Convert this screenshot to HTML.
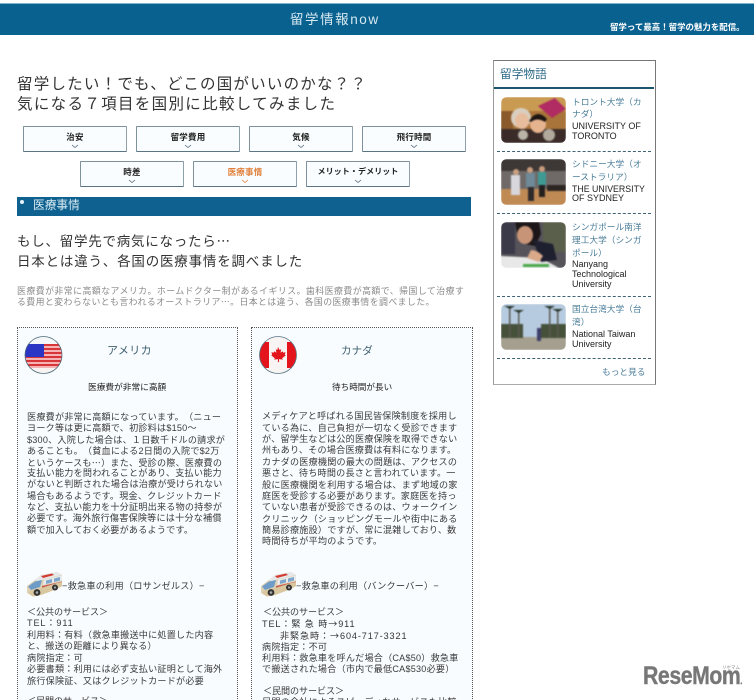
<!DOCTYPE html>
<html lang="ja"><head><meta charset="utf-8"><title>留学情報now</title>
<style>
html,body{margin:0;padding:0;background:#fff;width:754px;height:700px;overflow:hidden}
body{font-family:"Liberation Sans","Noto Sans CJK JP",sans-serif;text-spacing-trim:space-all}
#w{position:relative;width:754px;height:700px;overflow:hidden;filter:blur(.35px)}
.a{position:absolute}
.t{position:absolute;white-space:nowrap;line-height:1}
.j{font-family:"Noto Sans CJK JP",sans-serif}
.btn{position:absolute;width:102px;height:24px;background:#f9fdff;border:1px solid #7f929c;border-bottom:1.5px solid #5d7482;border-right:1.5px solid #8fa0aa;border-radius:1px}
.btn span{position:absolute;left:0;right:0;top:6.3px;text-align:center;font-size:8.5px;line-height:1;font-weight:700;color:#222;letter-spacing:.2px}
.btn svg{position:absolute;left:47px;top:17px}
.card{position:absolute;top:327px;height:380px;background:#f8fcff;border:1px dotted #555;box-sizing:border-box}
.b{font-size:9.1px;letter-spacing:.22px;color:#3a3a3a;margin-top:1px}
.l{font-size:8.7px;color:#4a7d99}
.e{font-size:9px;color:#222}
.d{position:absolute;left:497px;width:154px;border-top:1px dashed #3f6275}
.ph{position:absolute;left:501px;width:65px;height:46px;border-radius:6px;overflow:hidden}
.ph svg{filter:blur(.7px);display:block}
</style></head><body><div id="w">

<div class="a" style="left:0;top:3px;width:754px;height:1px;background:#7fb6cc"></div>
<div class="a" style="left:0;top:4px;width:754px;height:31px;background:#09618f"></div>
<div class="t" style="left:290px;top:13px;font-size:13.5px;letter-spacing:1.55px;color:#d6e8f0">留学情報now</div>
<div class="t" style="left:610px;top:22.700px;font-size:8.45px;font-weight:700;color:#fff">留学って最高！留学の魅力を配信。</div>

<div class="t" style="left:17px;top:76.500px;font-size:15.500px;letter-spacing:1.22px;color:#333">留学したい！でも、どこの国がいいのかな？？</div>
<div class="t" style="left:17px;top:96.500px;font-size:15.500px;letter-spacing:1.33px;color:#333">気になる７項目を国別に比較してみました</div>

<div class="btn" style="left:23px;top:126px"><span>治安</span><svg width="8" height="5"><path d="M1 1l3 2.5L7 1" fill="none" stroke="#567" stroke-width=".8"/></svg></div>
<div class="btn" style="left:136px;top:126px"><span>留学費用</span><svg width="8" height="5"><path d="M1 1l3 2.5L7 1" fill="none" stroke="#567" stroke-width=".8"/></svg></div>
<div class="btn" style="left:249px;top:126px"><span>気候</span><svg width="8" height="5"><path d="M1 1l3 2.5L7 1" fill="none" stroke="#567" stroke-width=".8"/></svg></div>
<div class="btn" style="left:362px;top:126px"><span>飛行時間</span><svg width="8" height="5"><path d="M1 1l3 2.5L7 1" fill="none" stroke="#567" stroke-width=".8"/></svg></div>
<div class="btn" style="left:80px;top:161px"><span>時差</span><svg width="8" height="5"><path d="M1 1l3 2.5L7 1" fill="none" stroke="#567" stroke-width=".8"/></svg></div>
<div class="btn" style="left:193px;top:161px"><span style="color:#e0803a">医療事情</span><svg width="8" height="5"><path d="M1 1l3 2.5L7 1" fill="none" stroke="#e0803a" stroke-width=".8"/></svg></div>
<div class="btn" style="left:306px;top:161px"><span style="font-size:8px;letter-spacing:.1px">メリット・デメリット</span><svg width="8" height="5"><path d="M1 1l3 2.5L7 1" fill="none" stroke="#567" stroke-width=".8"/></svg></div>

<div class="a" style="left:17px;top:197px;width:454px;height:19px;background:#0f6290"></div>
<div class="a" style="left:19.5px;top:199.5px;width:4px;height:4px;border-radius:50%;background:#e8f3f8"></div>
<div class="t" style="left:33px;top:200px;font-size:11.7px;color:#d9ebf3">医療事情</div>

<div class="t" style="left:17px;top:234px;font-size:13.5px;letter-spacing:.75px;color:#333">もし、留学先で病気になったら<span class="j">…</span></div>
<div class="t" style="left:17px;top:255px;font-size:13.5px;letter-spacing:.8px;color:#333">日本とは違う、各国の医療事情を調べました</div>

<div class="t" style="left:17px;top:287px;font-size:8.9px;letter-spacing:.48px;color:#8a8a8a">医療費が非常に高額なアメリカ。ホームドクター制があるイギリス。歯科医療費が高額で、帰国して治療す</div>
<div class="t" style="left:17px;top:298px;font-size:8.9px;letter-spacing:.43px;color:#8a8a8a">る費用と変わらないとも言われるオーストラリア<span class="j">…</span>。日本とは違う、各国の医療事情を調べました。</div>

<div class="card" style="left:17px;width:221px"></div>
<div class="card" style="left:251px;width:222px"></div>

<svg class="a" style="left:24px;top:336px" width="40" height="38" viewBox="0 0 40 38">
<defs><clipPath id="u"><circle cx="19.5" cy="19" r="18.5"/></clipPath></defs>
<circle cx="19.5" cy="19" r="18.5" fill="#f7f3f3"/>
<g clip-path="url(#u)">
<rect x="0" y="8" width="40" height="24" fill="#f6b3b3"/>
<g fill="#d8353a"><rect y="8" width="40" height="2"/><rect y="12" width="40" height="2"/><rect y="16" width="40" height="2"/><rect y="20" width="40" height="2"/><rect y="24" width="40" height="2"/><rect y="28" width="40" height="2"/></g>
<rect x="0" y="8" width="20" height="13" fill="#2b36c4"/>
<rect x="0" y="0" width="40" height="8" fill="#f4f6f8"/>
</g>
<circle cx="19.5" cy="19" r="18.5" fill="none" stroke="#4d6b7a" stroke-width=".8"/>
</svg>

<svg class="a" style="left:258px;top:336px" width="40" height="38" viewBox="0 0 40 38">
<defs><clipPath id="c"><circle cx="20" cy="19" r="18.5"/></clipPath></defs>
<circle cx="20" cy="19" r="18.5" fill="#f8f4f4"/>
<g clip-path="url(#c)">
<rect x="0" y="6" width="11" height="26" fill="#e3141c"/>
<rect x="29" y="6" width="11" height="26" fill="#e3141c"/>
<path d="M20 11l1.6 3 1.6-.8-.6 3.6 2-1.6.6 1.4 2.4-.4-.8 2.4 1 .6-3.6 3 .5 1.4-3.7-.5.1 3h-1.2l.1-3-3.7.5.5-1.4-3.6-3 1-.6-.8-2.4 2.4.4.6-1.4 2 1.6-.6-3.6 1.6.8z" fill="#e3141c"/>
</g>
<circle cx="20" cy="19" r="18.5" fill="none" stroke="#5a7684" stroke-width=".8"/>
</svg>

<div class="t" style="left:107px;top:346px;font-size:11px;letter-spacing:.4px;color:#3f5f70">アメリカ</div>
<div class="t" style="left:341px;top:346px;font-size:10.5px;letter-spacing:.1px;color:#3f5f70">カナダ</div>
<div class="t" style="left:88px;top:382.500px;font-size:8.7px;color:#222">医療費が非常に高額</div>
<div class="t" style="left:332px;top:382.500px;font-size:8.6px;color:#222">待ち時間が長い</div>

<div class="t b" style="left:27px;top:412px">医療費が非常に高額になっています。（ニュー</div>
<div class="t b" style="left:27px;top:423px">ヨーク等は更に高額で、初診料は$150～</div>
<div class="t b" style="left:27px;top:434.5px">$300、入院した場合は、１日数千ドルの請求が</div>
<div class="t b" style="left:27px;top:445.5px">あることも。（貧血による2日間の入院で$2万</div>
<div class="t b" style="left:27px;top:457px">というケースも<span class="j">…</span>）また、受診の際、医療費の</div>
<div class="t b" style="left:27px;top:468px">支払い能力を問われることがあり、支払い能力</div>
<div class="t b" style="left:27px;top:479px">がないと判断された場合は治療が受けられない</div>
<div class="t b" style="left:27px;top:490.5px">場合もあるようです。現金、クレジットカード</div>
<div class="t b" style="left:27px;top:501.5px">など、支払い能力を十分証明出来る物の持参が</div>
<div class="t b" style="left:27px;top:513px">必要です。海外旅行傷害保険等には十分な補償</div>
<div class="t b" style="left:27px;top:524.5px">額で加入しておく必要があるようです。</div>

<div class="t b" style="left:262px;top:411px">メディケアと呼ばれる国民皆保険制度を採用し</div>
<div class="t b" style="left:262px;top:422.5px">ている為に、自己負担が一切なく受診できます</div>
<div class="t b" style="left:262px;top:434px">が、留学生などは公的医療保険を取得できない</div>
<div class="t b" style="left:262px;top:445px">州もあり、その場合医療費は有料になります。</div>
<div class="t b" style="left:262px;top:457px">カナダの医療機関の最大の問題は、アクセスの</div>
<div class="t b" style="left:262px;top:468px">悪さと、待ち時間の長さと言われています。一</div>
<div class="t b" style="left:262px;top:479.5px">般に医療機関を利用する場合は、まず地域の家</div>
<div class="t b" style="left:262px;top:491px">庭医を受診する必要があります。家庭医を持っ</div>
<div class="t b" style="left:262px;top:502px">ていない患者が受診できるのは、ウォークイン</div>
<div class="t b" style="left:262px;top:513.5px">クリニック（ショッピングモールや街中にある</div>
<div class="t b" style="left:262px;top:525px">簡易診療施設）ですが、常に混雑しており、数</div>
<div class="t b" style="left:262px;top:536px">時間待ちが平均のようです。</div>

<svg class="a" style="left:27px;top:572px" width="36" height="25" viewBox="0 0 36 25">
<path d="M0 14L8 8l6-5L30 0l5 3v11l-5 3-16 6-8 1.500L0 21z" fill="#ded2b6"/>
<path d="M8 8l6-5L30 0l5 3-18 4-6 3z" fill="#e6e8ea"/>
<path d="M14 4l11-2.500 2 1.500-11 3z" fill="#d23c30"/>
<path d="M1 14.500L8 9.500l7-1.500-2 7-9 3z" fill="#6f9cc6"/>
<path d="M17 7.500L35 3.500v5L16 13z" fill="#e8eaec"/>
<path d="M19 8.500l6-1.500v3.500l-6 1.500zM27 6.500l6-1.500v3.500l-6 1.500z" fill="#7ea6cb"/>
<path d="M15 14l20-4.500V11l-20 5z" fill="#c9544a"/>
<path d="M2 19l12-3 16-5 5-1v4l-5 3-16 6-8 1.500L2 22z" fill="#d8c79f"/>
<circle cx="10" cy="20.500" r="3.400" fill="#333"/><circle cx="28" cy="15.500" r="3" fill="#333"/>
<circle cx="10" cy="20.500" r="1.300" fill="#aaa"/><circle cx="28" cy="15.500" r="1.100" fill="#aaa"/>
</svg>
<svg class="a" style="left:261px;top:572px" width="36" height="25" viewBox="0 0 36 25">
<path d="M0 14L8 8l6-5L30 0l5 3v11l-5 3-16 6-8 1.500L0 21z" fill="#ded2b6"/>
<path d="M8 8l6-5L30 0l5 3-18 4-6 3z" fill="#e6e8ea"/>
<path d="M14 4l11-2.500 2 1.500-11 3z" fill="#d23c30"/>
<path d="M1 14.500L8 9.500l7-1.500-2 7-9 3z" fill="#6f9cc6"/>
<path d="M17 7.500L35 3.500v5L16 13z" fill="#e8eaec"/>
<path d="M19 8.500l6-1.500v3.500l-6 1.500zM27 6.500l6-1.500v3.500l-6 1.500z" fill="#7ea6cb"/>
<path d="M15 14l20-4.500V11l-20 5z" fill="#c9544a"/>
<path d="M2 19l12-3 16-5 5-1v4l-5 3-16 6-8 1.500L2 22z" fill="#d8c79f"/>
<circle cx="10" cy="20.500" r="3.400" fill="#333"/><circle cx="28" cy="15.500" r="3" fill="#333"/>
<circle cx="10" cy="20.500" r="1.300" fill="#aaa"/><circle cx="28" cy="15.500" r="1.100" fill="#aaa"/>
</svg>

<div class="t" style="left:62px;top:582px;font-size:9.2px;letter-spacing:.2px;color:#3a3a3a">−救急車の利用（ロサンゼルス）−</div>
<div class="t" style="left:296px;top:582px;font-size:9.2px;letter-spacing:.2px;color:#3a3a3a">−救急車の利用（バンクーバー）−</div>

<div class="t b" style="left:27px;top:607px;letter-spacing:-.1px">＜公共のサービス＞</div>
<div class="t b" style="left:27px;top:618px;letter-spacing:.9px">TEL：911</div>
<div class="t b" style="left:27px;top:630px">利用料：有料（救急車搬送中に処置した内容</div>
<div class="t b" style="left:27px;top:641px">と、搬送の距離により異なる）</div>
<div class="t b" style="left:27px;top:652.5px">病院指定：可</div>
<div class="t b" style="left:27px;top:664px">必要書類：利用には必ず支払い証明として海外</div>
<div class="t b" style="left:27px;top:675.500px">旅行保険証、又はクレジットカードが必要</div>
<div class="t b" style="left:27px;top:696px;letter-spacing:-.1px">＜民間のサービス＞</div>

<div class="t b" style="left:263px;top:607px;letter-spacing:-.1px">＜公共のサービス＞</div>
<div class="t b" style="left:262px;top:618px;letter-spacing:.9px;color:#333">TEL：緊 急 時<span class="j">→</span>911</div>
<div class="t b" style="left:280px;top:630px;letter-spacing:.9px;color:#333">非緊急時：<span class="j">→</span>604-717-3321</div>
<div class="t b" style="left:262px;top:641.500px">病院指定：不可</div>
<div class="t b" style="left:262px;top:652.500px">利用料：救急車を呼んだ場合（CA$50）救急車</div>
<div class="t b" style="left:262px;top:664px">で搬送された場合（市内で最低CA$530必要）</div>
<div class="t b" style="left:263px;top:686px;letter-spacing:-.1px">＜民間のサービス＞</div>
<div class="t b" style="left:262px;top:697px">民間の会社によるスピーディなサービスも比較</div>

<!-- sidebar -->
<div class="a" style="left:492.5px;top:60px;width:161px;height:323px;border:1px solid #777;border-bottom:1.500px solid #aaa;border-left:1.500px solid #999;background:#fff"></div>
<div class="t" style="left:500px;top:69px;font-size:11.700px;color:#2f6b88">留学物語</div>
<div class="a" style="left:494px;top:87px;width:160px;height:1.500px;background:#1d5570"></div>

<div class="ph" style="top:97px">
<svg width="65" height="46" viewBox="0 0 65 46"><rect width="65" height="46" fill="#a9743a"/><rect width="65" height="14" fill="#c99a52"/><rect x="0" y="14" width="12" height="32" fill="#8a5a2c"/><rect x="0" y="32" width="65" height="14" fill="#3a2b28"/><path d="M37 9l17-8 11 11-14 9z" fill="#b02c62"/><circle cx="20" cy="21" r="10" fill="#d9cfc0"/><ellipse cx="21" cy="24" rx="7" ry="8" fill="#e8bd9e"/><ellipse cx="37" cy="27" rx="8" ry="9" fill="#e6b38f"/><path d="M28 24q8-13 18-2l-2 3q-8-5-14 0z" fill="#1c1512"/><circle cx="22" cy="38" r="5" fill="#b9b3a8"/><circle cx="48" cy="38" r="6" fill="#b0a99c"/></svg></div>
<div class="ph" style="top:159px">
<svg width="65" height="46" viewBox="0 0 65 46"><rect width="65" height="46" fill="#6f6a68"/><rect width="65" height="12" fill="#3d3735"/><rect y="30" width="65" height="16" fill="#c08a55"/><rect x="46" y="26" width="19" height="6" fill="#2d2522"/><rect x="10" y="16" width="9" height="20" fill="#d8d8dc"/><circle cx="15" cy="13" r="3" fill="#caa080"/><rect x="25" y="14" width="9" height="14" fill="#6f8a98"/><rect x="27" y="28" width="6" height="14" fill="#2e2a2a"/><circle cx="29" cy="11" r="3" fill="#c89c7e"/><rect x="37" y="13" width="8" height="13" fill="#3f9a94"/><rect x="38" y="26" width="6" height="12" fill="#23201f"/><circle cx="41" cy="10" r="3" fill="#c89c7e"/></svg></div>
<div class="ph" style="top:222px">
<svg width="65" height="46" viewBox="0 0 65 46"><rect width="65" height="46" fill="#56535a"/><rect x="42" y="0" width="23" height="30" fill="#5a5f4c"/><rect y="0" width="14" height="32" fill="#3b3a48"/><path d="M0 34l40 2 18 10H0z" fill="#e8e8e8"/><path d="M14 0h24l2 12-6 12-10-2-8-10z" fill="#1c1618"/><ellipse cx="24" cy="13" rx="8" ry="9" fill="#c89478"/><path d="M32 18l20 4 4 16-16 2z" fill="#1e2030"/><path d="M30 28q6 0 12 6l-4 6-12-4z" fill="#d9a98a"/><rect x="22" y="42" width="26" height="3" fill="#4aa84c"/></svg></div>
<div class="ph" style="top:304px">
<svg width="65" height="46" viewBox="0 0 65 46"><rect width="65" height="46" fill="#b7cbe0"/><rect y="33" width="65" height="13" fill="#a59f8f"/><rect y="20" width="22" height="14" fill="#46513a"/><rect x="40" y="20" width="25" height="14" fill="#46513a"/><rect x="8" y="2" width="1.500" height="32" fill="#5a5a50"/><rect x="17" y="6" width="1.500" height="28" fill="#5a5a50"/><rect x="48" y="2" width="1.500" height="32" fill="#5a5a50"/><rect x="56" y="5" width="1.500" height="29" fill="#5a5a50"/><path d="M3 2h11l-5 3zM12 6h11l-5 3zM43 2h11l-5 3zM51 5h11l-5 3z" fill="#27352a"/><rect x="36" y="24" width="4" height="13" fill="#3f3f6a"/></svg></div>

<div class="t l" style="left:572px;top:97.500px">トロント大学（カ</div>
<div class="t l" style="left:572px;top:110px">ナダ）</div>
<div class="t e" style="left:572px;top:122px">UNIVERSITY OF</div>
<div class="t e" style="left:572px;top:131.500px">TORONTO</div>
<div class="d" style="top:150.500px"></div>

<div class="t l" style="left:572px;top:160px">シドニー大学（オ</div>
<div class="t l" style="left:572px;top:173px">ーストラリア）</div>
<div class="t e" style="left:572px;top:184.500px;font-size:8.800px">THE UNIVERSITY</div>
<div class="t e" style="left:572px;top:194px">OF SYDNEY</div>
<div class="d" style="top:213px"></div>

<div class="t l" style="left:572px;top:222.500px">シンガポール南洋</div>
<div class="t l" style="left:572px;top:235.500px">理工大学（シンガ</div>
<div class="t l" style="left:572px;top:248.500px">ポール）</div>
<div class="t e" style="left:572px;top:260px">Nanyang</div>
<div class="t e" style="left:572px;top:269.500px">Technological</div>
<div class="t e" style="left:572px;top:279.500px">University</div>
<div class="d" style="top:295.500px"></div>

<div class="t l" style="left:572px;top:305px">国立台湾大学（台</div>
<div class="t l" style="left:572px;top:318px">湾）</div>
<div class="t e" style="left:572px;top:329.500px">National Taiwan</div>
<div class="t e" style="left:572px;top:339.500px">University</div>
<div class="d" style="top:358px"></div>
<div class="t l" style="left:602px;top:367.500px">もっと見る</div>

<div class="t" style="left:643px;top:664px;font-size:25px;font-weight:700;letter-spacing:-.5px;color:#777;-webkit-text-stroke:.4px #777;transform-origin:0 0;transform:scaleX(.85)">ReseMom<span style="font-size:8px">.</span></div>
<div class="t" style="left:722px;top:666px;font-size:4.500px;color:#888">リセマム</div>
</div></body></html>
